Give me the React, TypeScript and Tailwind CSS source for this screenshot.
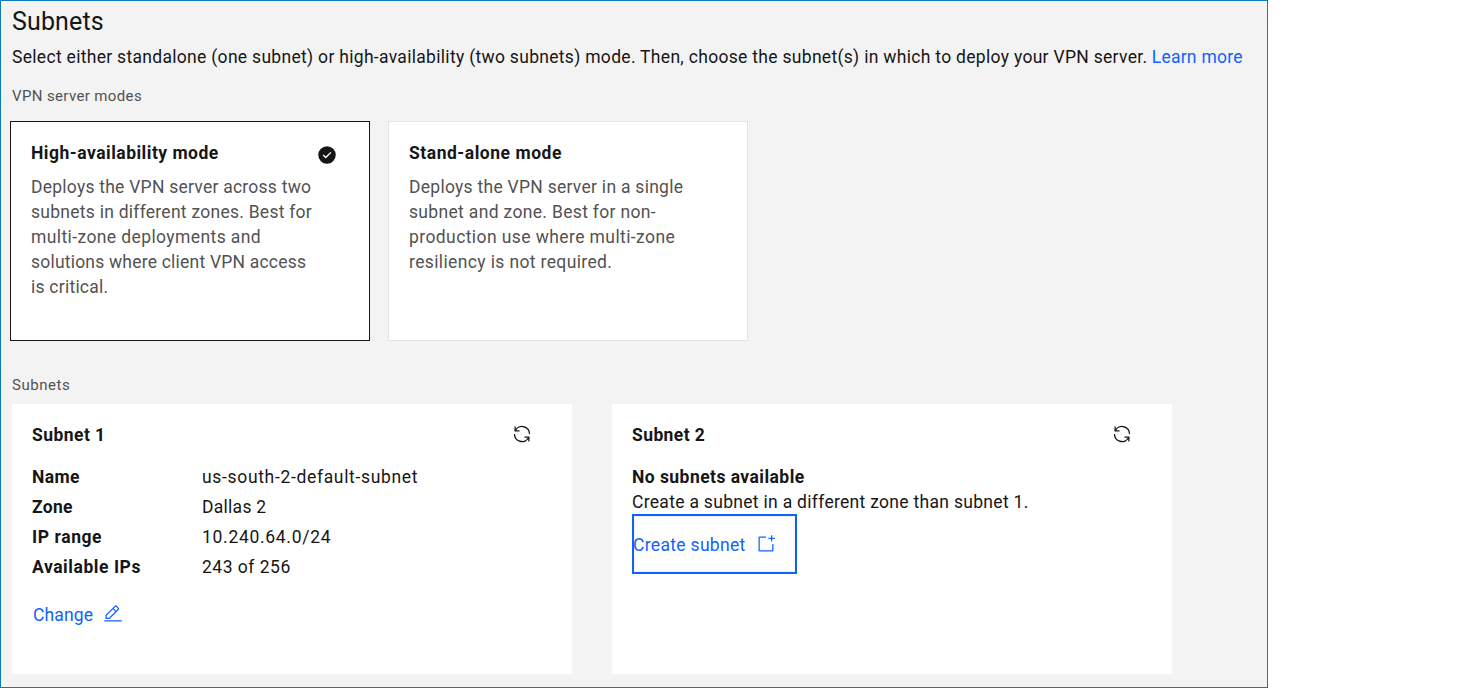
import type { ReactNode } from 'react';

function Icon({ children, className = '' }: { children: ReactNode; className?: string }) {
  return (
    <svg viewBox="0 0 32 32" width="20" height="20" fill="currentColor" aria-hidden="true" className={`shrink-0 ${className}`}>
      {children}
    </svg>
  );
}

function RefreshButton() {
  return (
    <button aria-label="Refresh" className="-mt-[3px] mr-10 h-5 w-5">
      <Icon>
        <path d="M12 10H6.78A11 11 0 0 1 27 16h2A13 13 0 0 0 6 7.68V4H4v8h8zM20 22h5.22A11 11 0 0 1 5 16H3a13 13 0 0 0 23 8.32V28h2v-8h-8z" />
      </Icon>
    </button>
  );
}

function Lines({ lines }: { lines: [string, string][] }) {
  return (
    <p className="mt-[9px] text-[#525252]">
      {lines.map(([text, tracking]) => (
        <span key={text} className={`block whitespace-nowrap ${tracking}`}>
          {text}
        </span>
      ))}
    </p>
  );
}

const details: [string, string, string, string][] = [
  ['Name', 'tracking-[0.4px]', 'us-south-2-default-subnet', 'tracking-[0.67px]'],
  ['Zone', 'tracking-[0.3px]', 'Dallas 2', 'tracking-[0.27px]'],
  ['IP range', 'tracking-[0.58px]', '10.240.64.0/24', 'tracking-[0.7px]'],
  ['Available IPs', 'tracking-[0.56px]', '243 of 256', 'tracking-[0.5px]'],
];

export default function App() {
  return (
    <div className="h-[688px] w-[1462px] overflow-hidden bg-white font-['Roboto',sans-serif] text-[17.5px] leading-[25px] text-[#161616]">
      <main className="h-[688px] w-[1268px] border border-[#0a7db8] bg-[#f3f3f3] pl-[11px]">
        <h1 className="pt-[5px] text-[25px] leading-[32px] tracking-[0.15px]">Subnets</h1>
        <p className="mt-[7px] whitespace-nowrap">
          <span className="tracking-[0.303px]">
            Select either standalone (one subnet) or high-availability (two subnets) mode. Then, choose the subnet(s) in which to deploy your VPN server.
          </span>{' '}
          <a href="#" className="tracking-[0.25px] text-[#0f62fe]">Learn more</a>
        </p>
        <p className="mt-4 text-[15px] leading-5 tracking-[0.37px] text-[#525252]">VPN server modes</p>

        <section className="mt-[15px] -ml-0.5 flex gap-[18px]">
          <article className="h-[220px] w-[360px] border border-[#161616] bg-white px-5 pt-[19px]">
            <div className="flex justify-between">
              <h2 className="font-bold tracking-[0.5px]">High-availability mode</h2>
              <Icon className="mt-[4px] mr-3">
                <path d="M16 2a14 14 0 1 0 14 14A14 14 0 0 0 16 2zm-2 19.59-5-5L10.59 15 14 18.41 21.41 11l1.596 1.586z" />
              </Icon>
            </div>
            <Lines
              lines={[
                ['Deploys the VPN server across two', 'tracking-[0.24px]'],
                ['subnets in different zones. Best for', 'tracking-[0.26px]'],
                ['multi-zone deployments and', 'tracking-[0.4px]'],
                ['solutions where client VPN access', 'tracking-[0.21px]'],
                ['is critical.', 'tracking-[0.24px]'],
              ]}
            />
          </article>
          <article className="h-[220px] w-[360px] border border-[#e5e5e5] bg-white px-5 pt-[19px]">
            <h2 className="font-bold tracking-[0.53px]">Stand-alone mode</h2>
            <Lines
              lines={[
                ['Deploys the VPN server in a single', 'tracking-[0.27px]'],
                ['subnet and zone. Best for non-', 'tracking-[0.33px]'],
                ['production use where multi-zone', 'tracking-[0.41px]'],
                ['resiliency is not required.', 'tracking-[0.37px]'],
              ]}
            />
          </article>
        </section>

        <p className="mt-[34px] text-[15px] leading-5 tracking-[0.55px] text-[#525252]">Subnets</p>

        <section className="mt-[9px] flex gap-10">
          <article className="h-[270px] w-[560px] bg-white pt-[19px] pl-5">
            <div className="flex items-center justify-between">
              <h2 className="font-bold tracking-[0.45px]">Subnet 1</h2>
              <RefreshButton />
            </div>
            <dl className="mt-[14px] grid grid-cols-[170px_1fr] leading-[30px]">
              {details.map(([label, labelTracking, value, valueTracking]) => (
                <div key={label} className="contents">
                  <dt className={`font-bold ${labelTracking}`}>{label}</dt>
                  <dd className={valueTracking}>{value}</dd>
                </div>
              ))}
            </dl>
            <button className="mt-[21px] ml-px flex items-center text-[#0f62fe]">
              <span className="w-[70px] text-left tracking-[0.15px]">Change</span>
              <Icon className="-mt-[3px]">
                <path d="M2 26h28v2H2zM25.4 9c.8-.8.8-2 0-2.8l-3.6-3.6c-.8-.8-2-.8-2.8 0l-15 15V24h6.4l15-15zm-5-5L24 7.6l-3 3L17.4 7l3-3zM6 22v-3.6l10-10 3.6 3.6-10 10H6z" />
              </Icon>
            </button>
          </article>
          <article className="h-[270px] w-[560px] bg-white pt-[19px] pl-5">
            <div className="flex items-center justify-between">
              <h2 className="font-bold tracking-[0.4px]">Subnet 2</h2>
              <RefreshButton />
            </div>
            <p className="mt-[17px] font-bold tracking-[0.45px]">No subnets available</p>
            <p className="tracking-[0.3px]">Create a subnet in a different zone than subnet 1.</p>
            <button className="-mt-px flex h-[60px] w-[165px] items-center border-2 border-[#0f62fe] text-[#0f62fe] inset-ring-1 inset-ring-[#f3f3f3]">
              <span className="-ml-px w-[123px] pt-0.5 text-left tracking-[0.32px]">Create subnet</span>
              <Icon>
                <path d="M26 26H6V6h10V4H6a2 2 0 0 0-2 2v20a2 2 0 0 0 2 2h20a2 2 0 0 0 2-2V16h-2z" />
                <path d="M26 6V2h-2v4h-4v2h4v4h2V8h4V6z" />
              </Icon>
            </button>
          </article>
        </section>
      </main>
    </div>
  );
}
